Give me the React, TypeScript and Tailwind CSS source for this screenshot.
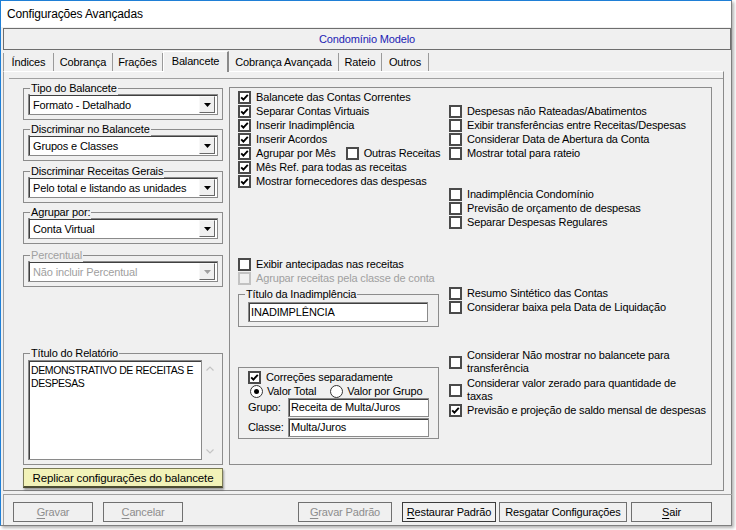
import React from 'react';

const Box = ({ checked, disabled }: { checked?: boolean; disabled?: boolean }) => (
  <span
    className={`w-[13px] h-[13px] shrink-0 border-2 flex items-center justify-center ${
      disabled ? 'border-[#c2c2c2] bg-[#f0f0f0]' : 'border-[#4a4a4a] bg-white'
    }`}
  >
    {checked && (
      <svg width="9" height="9" viewBox="0 0 9 9">
        <path d="M1.2 4.3 L3.4 6.6 L7.8 1.8" stroke="#000" strokeWidth="1.9" fill="none" />
      </svg>
    )}
  </span>
);

const Check = ({ label, checked, disabled }: any) => (
  <div className="h-[14px] flex items-center gap-[5px]">
    <Box checked={checked} disabled={disabled} />
    <span className={`text-[11px] leading-[14px] whitespace-nowrap ${disabled ? 'text-[#a0a0a0]' : 'text-black'}`}>
      {label}
    </span>
  </div>
);

const Check2 = ({ l1, l2, className }: any) => (
  <div className={`h-[26px] flex items-center gap-[5px] ${className}`}>
    <Box />
    <span className="text-[11px] leading-[13px] whitespace-nowrap">
      {l1}
      <br />
      {l2}
    </span>
  </div>
);

const Radio = ({ checked }: { checked?: boolean }) => (
  <span className="w-[13px] h-[13px] shrink-0 rounded-full border border-[#333] bg-white flex items-center justify-center">
    {checked && <span className="w-[5px] h-[5px] rounded-full bg-black" />}
  </span>
);

const Legend = ({ text, disabled }: { text: string; disabled?: boolean }) => (
  <span
    className={`absolute left-[6px] top-[-8px] px-[1px] bg-[#f0f0f0] text-[11px] leading-[14px] whitespace-nowrap ${
      disabled ? 'text-[#a0a0a0]' : 'text-black'
    }`}
  >
    {text}
  </span>
);

const Combo = ({ value, disabled }: { value: string; disabled?: boolean }) => (
  <div className="ml-[4px] mt-[5px] w-[190px] h-[21px] bg-white border border-[#8a8a8a] shadow-[inset_1px_1px_0_#404040] flex items-center pl-[4px] pr-[2px]">
    <span className={`flex-1 text-[11px] leading-[14px] whitespace-nowrap ${disabled ? 'text-[#a0a0a0]' : 'text-black'}`}>
      {value}
    </span>
    <div className="w-[16px] h-[17px] bg-[#f0f0f0] border-t border-l border-t-[#f8f8f8] border-l-[#f8f8f8] border-r border-b border-r-[#696969] border-b-[#696969] flex items-center justify-center">
      <svg width="7" height="4" viewBox="0 0 7 4">
        <path d="M0 0 H7 L3.5 4 Z" fill={disabled ? '#a0a0a0' : '#000'} />
      </svg>
    </div>
  </div>
);

const ComboGroup = ({ title, value, disabled, mt }: any) => (
  <div className={`relative w-[200px] h-[32px] border border-[#8c8c8c] ${mt}`}>
    <Legend text={title} disabled={disabled} />
    <Combo value={value} disabled={disabled} />
  </div>
);

const Field = ({ value, className }: { value: string; className?: string }) => (
  <div
    className={`bg-white border border-[#8a8a8a] shadow-[inset_1px_1px_0_#404040] pl-[2px] text-[11px] leading-[16px] whitespace-nowrap ${className}`}
  >
    {value}
  </div>
);

const Tab = ({ label, w, selected, first }: any) =>
  selected ? (
    <div
      className={`${w} h-[21px] -mb-px relative z-10 bg-[#f0f0f0] border-t border-l border-t-white border-l-white border-r-2 border-r-[#8a8a8a] flex items-center justify-center text-[11px] pb-[1px]`}
    >
      {label}
    </div>
  ) : (
    <div
      className={`${w} h-[18px] border-r border-r-[#9a9a9a] ${first ? 'border-l border-l-[#9a9a9a]' : ''} flex items-center justify-center text-[11px]`}
    >
      {label}
    </div>
  );

const Btn = ({ u, rest, w, disabled, dark, className }: any) => (
  <div
    className={`${w} h-[20px] border ${dark ? 'border-[#3c3c3c]' : 'border-[#707070]'} bg-[#f0f0f0] flex items-center justify-center text-[11px] leading-[14px] whitespace-nowrap ${
      disabled ? 'text-[#8d8d8d]' : 'text-black'
    } ${className}`}
  >
    {u ? <span className="underline underline-offset-[2px]">{u}</span> : null}
    {rest}
  </div>
);

export default function App() {
  return (
    <div className="w-[736px] h-[530px] bg-white overflow-hidden font-['Liberation_Sans',Arial,sans-serif] tracking-[-0.15px] text-black">
      <div className="w-[732px] h-[526px] bg-[#f0f0f0] border-t border-l border-[#1f7fd6] border-r border-r-[#7f7f7f] border-b border-b-[#7f7f7f] shadow-[2px_2px_3px_rgba(0,0,0,0.3)] flex flex-col">
        {/* title bar */}
        <div className="h-[26px] bg-white pl-[6px] flex items-center text-[12px]">Configurações Avançadas</div>

        {/* header */}
        <div className="mt-[1px] ml-[2px] w-[728px] h-[22px] border border-[#6e6e6e] flex items-center justify-center text-[11px] text-[#1c1cb4]">
          Condomínio Modelo
        </div>

        {/* tabs */}
        <div className="mt-[1px] ml-[2px] h-[20px] flex items-end">
          <Tab label="Índices" w="w-[51px]" first />
          <Tab label="Cobrança" w="w-[59px]" />
          <Tab label="Frações" w="w-[50px]" />
          <Tab label="Balancete" w="w-[66px]" selected />
          <Tab label="Cobrança Avançada" w="w-[110px]" />
          <Tab label="Rateio" w="w-[43px]" />
          <Tab label="Outros" w="w-[47px]" />
        </div>

        {/* tab page */}
        <div className="ml-[2px] w-[721px] h-[420px] border-l border-l-[#a0a0a0] border-t border-t-white border-r border-r-[#8a8a8a] border-b border-b-[#8a8a8a]">
          <div className="mt-[6px] ml-[5px] border-t border-t-[#a0a0a0] flex items-start">
            {/* left column */}
            <div className="ml-[14px] mt-[9px] w-[200px] flex flex-col">
              <ComboGroup title="Tipo do Balancete" value="Formato - Detalhado" mt="" />
              <ComboGroup title="Discriminar no Balancete" value="Grupos e Classes" mt="mt-[9px]" />
              <ComboGroup title="Discriminar Receitas Gerais" value="Pelo total e listando as unidades" mt="mt-[10px]" />
              <ComboGroup title="Agrupar por:" value="Conta Virtual" mt="mt-[9px]" />
              <ComboGroup title="Percentual" value="Não incluir Percentual" disabled mt="mt-[11px]" />

              <div className="relative mt-[66px] w-[200px] h-[112px] border border-[#8c8c8c]">
                <Legend text="Título do Relatório" />
                <div className="ml-[4px] mt-[6px] flex">
                  <div className="w-[174px] h-[100px] bg-white border border-[#8a8a8a] shadow-[inset_1px_1px_0_#404040] pl-[2px] pt-[3px] text-[10.5px] tracking-[-0.4px] leading-[13px] whitespace-nowrap">
                    DEMONSTRATIVO DE RECEITAS E
                    <br />
                    DESPESAS
                  </div>
                  <div className="w-[16px] h-[100px] flex flex-col items-center justify-between py-[6px]">
                    <svg width="8" height="5" viewBox="0 0 8 5">
                      <path d="M0.5 4.5 L4 1 L7.5 4.5" stroke="#c4c4c4" strokeWidth="1.2" fill="none" />
                    </svg>
                    <svg width="8" height="5" viewBox="0 0 8 5">
                      <path d="M0.5 0.5 L4 4 L7.5 0.5" stroke="#c4c4c4" strokeWidth="1.2" fill="none" />
                    </svg>
                  </div>
                </div>
              </div>

              <div className="mt-[3px] w-[200px] h-[20px] bg-[#f2f2b8] border border-[#7a7a55] border-b-2 border-b-[#4c4c33] shadow-[1px_2px_2px_rgba(0,0,0,0.35)] flex items-center justify-center text-[11.5px] leading-[14px] whitespace-nowrap">
                Replicar configurações do balancete
              </div>
            </div>

            {/* main options frame */}
            <div className="ml-[6px] mt-[8px] w-[483px] h-[378px] border border-[#8c8c8c] flex">
              {/* middle column */}
              <div className="ml-[8px] w-[211px] flex flex-col">
                <div className="mt-[2px] flex flex-col">
                  <Check label="Balancete das Contas Correntes" checked />
                  <Check label="Separar Contas Virtuais" checked />
                  <Check label="Inserir Inadimplência" checked />
                  <Check label="Inserir Acordos" checked />
                  <div className="flex items-center">
                    <Check label="Agrupar por Mês" checked />
                    <div className="ml-[10px]">
                      <Check label="Outras Receitas" />
                    </div>
                  </div>
                  <Check label="Mês Ref. para todas as receitas" checked />
                  <Check label="Mostrar fornecedores das despesas" checked />
                </div>

                <div className="mt-[69px] flex flex-col">
                  <Check label="Exibir antecipadas nas receitas" />
                  <Check label="Agrupar receitas pela classe de conta" disabled />
                </div>

                <div className="relative mt-[9px] w-[201px] h-[33px] border border-[#8c8c8c]">
                  <Legend text="Título da Inadimplência" />
                  <Field value="INADIMPLÊNCIA" className="ml-[9px] mt-[7px] w-[180px] h-[20px] pt-[1px]" />
                </div>

                <div className="mt-[40px] w-[201px] h-[72px] border border-[#8c8c8c] pl-[9px] flex flex-col">
                  <div className="mt-[2px]">
                    <Check label="Correções separadamente" checked />
                  </div>
                  <div className="h-[14px] flex items-center text-[11px] leading-[14px]">
                    <span className="ml-[2px]">
                      <Radio checked />
                    </span>
                    <span className="ml-[4px]">Valor Total</span>
                    <span className="ml-[14px]">
                      <Radio />
                    </span>
                    <span className="ml-[4px]">Valor por Grupo</span>
                  </div>
                  <div className="flex items-center text-[11px]">
                    <span className="w-[40px]">Grupo:</span>
                    <Field value="Receita de Multa/Juros" className="w-[141px] h-[19px]" />
                  </div>
                  <div className="mt-[1px] flex items-center text-[11px]">
                    <span className="w-[40px]">Classe:</span>
                    <Field value="Multa/Juros" className="w-[141px] h-[19px]" />
                  </div>
                </div>
              </div>

              {/* right column */}
              <div className="flex flex-col">
                <div className="mt-[16px] flex flex-col">
                  <Check label="Despesas não Rateadas/Abatimentos" />
                  <Check label="Exibir transferências entre Receitas/Despesas" />
                  <Check label="Considerar Data de Abertura da Conta" />
                  <Check label="Mostrar total para rateio" />
                </div>
                <div className="mt-[27px] flex flex-col">
                  <Check label="Inadimplência Condomínio" />
                  <Check label="Previsão de orçamento de despesas" />
                  <Check label="Separar Despesas Regulares" />
                </div>
                <div className="mt-[57px] flex flex-col">
                  <Check label="Resumo Sintético das Contas" />
                  <Check label="Considerar baixa pela Data de Liquidação" />
                </div>
                <Check2 l1="Considerar Não mostrar no balancete para" l2="transferência" className="mt-[35px]" />
                <Check2 l1="Considerar valor zerado para quantidade de" l2="taxas" className="mt-[2px]" />
                <Check label="Previsão e projeção de saldo mensal de despesas" checked />
              </div>
            </div>
          </div>
        </div>

        {/* button panel */}
        <div className="mt-[3px] ml-[2px] w-[729px] h-[31px] border-t border-l border-[#a0a0a0] flex items-start pt-[7px]">
          <Btn u="G" rest="ravar" w="w-[80px]" disabled className="ml-[9px]" />
          <Btn u="C" rest="ancelar" w="w-[80px]" disabled className="ml-[10px]" />
          <Btn u="G" rest="ravar Padrão" w="w-[94px]" disabled className="ml-[115px]" />
          <Btn u="R" rest="estaurar Padrão" w="w-[94px]" dark className="ml-[10px]" />
          <Btn rest="Resgatar Configurações" w="w-[128px]" className="ml-[3px]" />
          <Btn u="S" rest="air" w="w-[81px]" className="ml-[4px]" />
        </div>
      </div>
    </div>
  );
}
